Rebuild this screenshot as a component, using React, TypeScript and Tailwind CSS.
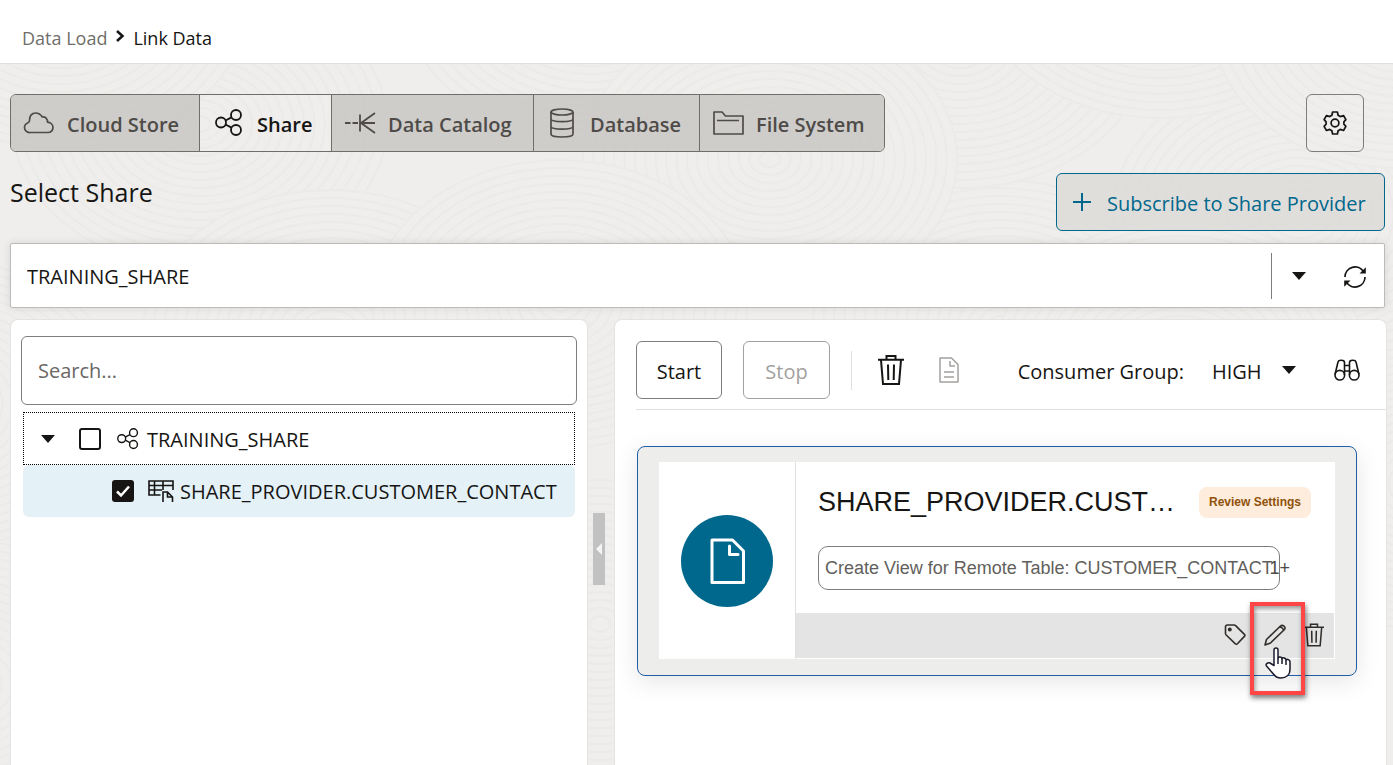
import React from "react";

type IconProps = { className?: string };

const ShareIcon = ({ className }: IconProps) => (
  <svg viewBox="0 0 28 28" className={className} fill="none" stroke="currentColor" strokeWidth="1.8" aria-hidden="true">
    <circle cx="6" cy="13.500" r="5" />
    <circle cx="21" cy="6" r="5" />
    <circle cx="21" cy="21" r="5" />
    <path d="M10.500 11.500 L16.500 8.400 M10.500 15.500 L16.500 18.600" />
  </svg>
);

const CloudIcon = ({ className }: IconProps) => (
  <svg viewBox="0 0 32 24" className={className} fill="none" stroke="currentColor" strokeWidth="1.7" strokeLinejoin="round" aria-hidden="true">
    <path d="M7 21.5 H25 a5 5 0 0 0 5-5 c0-3-2.500-5.200-5.500-5.400 c.2-3.400-2.300-5.600-5.200-5.100 C17.500 3 15.500 2 12.500 2 C9 2 6.400 4.600 6.600 9 C6.600 10.500 6.200 11.200 5 11.700 C3 12.500 1.500 14 1.500 16.500 A5 5 0 0 0 7 21.500 Z" />
  </svg>
);

const CatalogIcon = ({ className }: IconProps) => (
  <svg viewBox="0 0 32 24" className={className} fill="none" stroke="currentColor" strokeWidth="1.8" aria-hidden="true">
    <path d="M1 12 H6.500 M8.500 12 H14 M16 3.500 V20.500 M16 12 H31 M17 12 L31 2 M17 12 L31 22" />
  </svg>
);

const DatabaseIcon = ({ className }: IconProps) => (
  <svg viewBox="0 0 24 30" className={className} fill="none" stroke="currentColor" strokeWidth="1.7" aria-hidden="true">
    <ellipse cx="12" cy="4" rx="11" ry="3" />
    <path d="M1 4 V26 C1 30 23 30 23 26 V4 M1 11 C1 14.500 23 14.500 23 11 M1 18.500 C1 22 23 22 23 18.500" />
  </svg>
);

const FolderIcon = ({ className }: IconProps) => (
  <svg viewBox="0 0 32 24" className={className} fill="none" stroke="currentColor" strokeWidth="1.7" strokeLinejoin="round" aria-hidden="true">
    <path d="M2 23 V1 H10 L13.500 5 H31 V23 Z M5 9.500 H27" />
  </svg>
);

const GearIcon = ({ className }: IconProps) => (
  <svg viewBox="0 0 24 24" className={className} fill="none" stroke="currentColor" strokeWidth="1.700" strokeLinejoin="round" aria-hidden="true">
    <circle cx="12" cy="12" r="3.900" />
    <path d="M9.600 1 H14.400 L15.100 4.300 L17.300 5.600 L20.500 4.500 L22.900 8.700 L20.900 10.800 V13.200 L22.900 15.300 L20.500 19.500 L17.300 18.400 L15.100 19.700 L14.400 23 H9.600 L8.900 19.700 L6.700 18.400 L3.500 19.500 L1.100 15.300 L3.100 13.200 V10.800 L1.100 8.700 L3.500 4.500 L6.700 5.600 L8.900 4.300 Z" />
  </svg>
);

const RefreshIcon = ({ className }: IconProps) => (
  <svg viewBox="0 0 24 24" className={className} fill="none" stroke="currentColor" strokeWidth="1.700" aria-hidden="true">
    <path d="M2 12 A10 10 0 0 1 20.500 6.700 M22 12 A10 10 0 0 1 3.500 17.300" />
    <path d="M22.800 2.300 V8.500 H16.500 Z M1.200 21.700 V15.500 H7.500 Z" fill="currentColor" stroke="none" />
  </svg>
);

const Caret = ({ className }: IconProps) => (
  <svg viewBox="0 0 14 8" className={className} fill="currentColor" aria-hidden="true">
    <path d="M0 0 H14 L7 8 Z" />
  </svg>
);

const TrashIcon = ({ className }: IconProps) => (
  <svg viewBox="0 0 26 30" className={className} fill="none" stroke="currentColor" strokeWidth="2" aria-hidden="true">
    <path d="M0 4.800 H26 M8.500 4.800 V1 H17.500 V4.800 M3 5 L5 29 H21 L23 5 M10 9.500 L10.300 25 M16 9.500 L15.700 25" />
  </svg>
);

const FileTextIcon = ({ className }: IconProps) => (
  <svg viewBox="0 0 20 26" className={className} fill="none" stroke="currentColor" strokeWidth="1.500" strokeLinejoin="round" aria-hidden="true">
    <path d="M1 1 H12.500 L19 7.500 V25 H1 Z M11 4 V9 H16 M5 15 H15 M5 20 H15" />
  </svg>
);

const FileIcon = ({ className }: IconProps) => (
  <svg viewBox="0 0 36 46" className={className} fill="none" stroke="currentColor" strokeWidth="3" strokeLinejoin="round" strokeLinecap="round" aria-hidden="true">
    <path d="M3 2 H23.500 L34.500 13 V44.500 H3 Z M20.500 8 V16.500 H29" />
  </svg>
);

const BinocularsIcon = ({ className }: IconProps) => (
  <svg viewBox="0 0 26 22" className={className} fill="none" stroke="currentColor" strokeWidth="1.600" aria-hidden="true">
    <circle cx="5.800" cy="16.200" r="4.800" />
    <circle cx="20.200" cy="16.200" r="4.800" />
    <path d="M1 15.500 L4 3 C4.500 .5 10.500 .5 10.500 3.500 V16 M25 15.500 L22 3 C21.500 .5 15.500 .5 15.500 3.500 V16 M10.500 6.500 H15.500 M10.500 12 H15.500" />
  </svg>
);

const TableIcon = ({ className }: IconProps) => (
  <svg viewBox="0 0 26 22" className={className} fill="none" stroke="currentColor" strokeWidth="1.600" aria-hidden="true">
    <path d="M12.500 15 H1 V1 H25 V10 M1 5.500 H25 M1 10 H14 M6.500 1 V15 M15 1 V10" />
    <path d="M15 22 V12 H19.500 L24.500 17 V22 M19.500 12 V17 H24.500" />
  </svg>
);

const TagIcon = ({ className }: IconProps) => (
  <svg viewBox="0 0 22 22" className={className} fill="none" stroke="currentColor" strokeWidth="1.600" strokeLinejoin="round" aria-hidden="true">
    <path d="M1.500 3 Q1.500 1 3.500 1 H10 Q11 1 11.600 1.600 L20.400 10.400 Q21.400 11.400 20.400 12.400 L13.400 19.800 Q12.400 20.800 11.400 19.800 L2.200 11 Q1.500 10.300 1.500 9.500 Z" />
    <circle cx="5.800" cy="5.500" r="1.200" fill="currentColor" />
  </svg>
);

const PencilIcon = ({ className }: IconProps) => (
  <svg viewBox="0 0 22 22" className={className} fill="none" stroke="currentColor" strokeWidth="1.600" strokeLinejoin="round" aria-hidden="true">
    <path d="M1 21 L2.500 15.500 L16.500 2 C18.500 .2 22.500 3 20.500 5.500 L6.500 19 Z M15.500 3 C17.500 3 19.500 4.500 19.300 6.700" />
  </svg>
);

const HandCursor = ({ className }: IconProps) => (
  <svg viewBox="0 0 26 32" className={className} fill="#fff" stroke="#1b1b2b" strokeWidth="1.500" strokeLinejoin="round" aria-hidden="true">
    <path d="M9 18.500 V3 C9 .2 13 .2 13 3 V11 C13.500 9.500 16.500 9.800 17 11.500 C18 10.300 20.500 10.800 21 12.800 C22.500 11.800 25 12.800 25 15 V22 C25 28 21 31 16 31 C12 31 10 29.500 8 26.500 L1.500 19 C.2 17 3 15 5 16 Z" />
    <path d="M13 11 V17 M17 11.500 V17 M21 12.800 V18" />
  </svg>
);

const ripples = [
  { x: 200, y: 60 }, { x: 1000, y: 260 }, { x: 1300, y: 150 }, { x: 960, y: -20 },
  { x: 60, y: -60 }, { x: 330, y: 270 }, { x: 590, y: -70 }, { x: 770, y: 95 },
  { x: 1160, y: -90 }, { x: 1180, y: 300 }, { x: 560, y: 240 }, { x: 600, y: 560 },
  { x: -60, y: 340 }, { x: -40, y: 620 }, { x: 1420, y: 420 }, { x: 1400, y: -40 },
];
const radii = Array.from({ length: 18 }, (_, i) => 8 + i * 8);

const Texture = () => (
  <svg className="pointer-events-none absolute inset-0 h-full w-full" fill="#efeeec" stroke="#ebeae8" strokeWidth="2" aria-hidden="true">
    {ripples.map((c) => (
      <g key={`${c.x}:${c.y}`}>
        {[...radii].reverse().map((r) => (
          <ellipse key={r} cx={c.x} cy={c.y} rx={r * 1.3} ry={r} />
        ))}
      </g>
    ))}
  </svg>
);

const tabs = [
  { label: "Cloud Store", icon: <CloudIcon className="h-6 w-8" />, box: "w-[189px] pl-3 gap-3" },
  { label: "Share", icon: <ShareIcon className="h-7 w-7" />, box: "w-[132px] pl-[15px] gap-3.5", active: true },
  { label: "Data Catalog", icon: <CatalogIcon className="h-6 w-8" />, box: "w-[202px] pl-3 gap-3" },
  { label: "Database", icon: <DatabaseIcon className="h-[30px] w-6" />, box: "w-[166px] pl-4 gap-4" },
  { label: "File System", icon: <FolderIcon className="h-6 w-8" />, box: "w-[184px] pl-3 gap-3" },
];

function SourceTabs() {
  return (
    <div role="tablist" aria-label="Source" className="flex h-[58px] divide-x divide-[#706e6b] overflow-hidden rounded-md border border-[#706e6b]">
      {tabs.map((t) => (
        <button
          key={t.label}
          type="button"
          role="tab"
          aria-selected={!!t.active}
          className={`flex items-center text-xl font-semibold whitespace-nowrap ${t.box} ${t.active ? "text-[#161513]" : "bg-[#cccac8]/95 text-[#4e4b48]"}`}
        >
          {t.icon}
          <span className="pt-1">{t.label}</span>
        </button>
      ))}
    </div>
  );
}

function ShareTree() {
  return (
    <section className="flex w-[578px] shrink-0 flex-col rounded-t-lg border border-b-0 border-[#e4e3e1] bg-white px-2.5 pt-4">
      <input
        aria-label="Search"
        placeholder="Search..."
        className="h-[69px] w-full rounded-md border border-[#7f7d7a] px-4 text-xl placeholder:text-[#6a6764] placeholder:opacity-100"
      />
      <ul role="tree" aria-label="Shares" className="mx-0.5 mt-[7px] text-xl">
        <li role="treeitem" aria-expanded="true">
          <div className="flex h-[53px] items-center border border-dotted border-black pl-[17px]">
            <Caret className="h-2 w-3.5" />
            <input type="checkbox" id="training" className="ml-6 size-[22px] appearance-none rounded-[3px] border-2 border-[#161513]" />
            <label htmlFor="training" className="ml-4 flex items-center gap-2">
              <ShareIcon className="size-[22px]" />
              <span className="pt-0.5">TRAINING_SHARE</span>
            </label>
          </div>
          <ul role="group">
            <li role="treeitem" className="flex h-[52px] items-center rounded-md bg-[#e4f1f7] pl-[89px]">
              <span className="grid size-[22px]">
                <input type="checkbox" id="contact" defaultChecked className="col-start-1 row-start-1 size-[22px] appearance-none rounded-[3px] bg-[#161513]" />
                <svg viewBox="0 0 22 22" className="pointer-events-none col-start-1 row-start-1" fill="none" stroke="#fff" strokeWidth="2.500" aria-hidden="true">
                  <path d="M5 11.500 L9 15.500 L17 6.500" />
                </svg>
              </span>
              <label htmlFor="contact" className="ml-3.5 flex items-center gap-1.5 whitespace-nowrap">
                <TableIcon className="h-[22px] w-[26px]" />
                <span className="pt-0.5">SHARE_PROVIDER.CUSTOMER_CONTACT</span>
              </label>
            </li>
          </ul>
        </li>
      </ul>
    </section>
  );
}

function JobCard() {
  return (
    <article className="relative mt-9 mr-[29px] ml-px flex h-[230px] rounded-lg border border-[#1f5fa8] bg-[#ededeb] px-[21px] pt-[15px] pb-4 font-['Liberation_Sans',Arial,sans-serif] shadow-[0_6px_24px_rgba(0,0,0,0.1)]">
      <div className="flex w-[137px] shrink-0 items-center justify-center border-r border-[#e2e1df] bg-white">
        <div className="flex size-[92px] items-center justify-center rounded-full bg-[#00688c] text-white">
          <FileIcon className="h-[46px] w-9" />
        </div>
      </div>
      <div className="flex min-w-0 flex-1 flex-col bg-white">
        <div className="flex items-center justify-between pt-6 pr-6 pl-[22px]">
          <h2 className="text-[27px] leading-8 whitespace-nowrap">SHARE_PROVIDER.CUST…</h2>
          <span className="flex h-[31px] w-28 items-center justify-center rounded-lg bg-[#feecdc] text-xs font-bold whitespace-nowrap text-[#8f520a]">Review Settings</span>
        </div>
        <div className="relative mt-7 mr-[55px] ml-[22px]">
          <input
            aria-label="Action"
            readOnly
            defaultValue="Create View for Remote Table: CUSTOMER_CONTACT"
            className="h-11 w-full rounded-[10px] border border-[#7f7d7a] pl-1.5 text-lg text-[#625f5c]"
          />
          <span className="absolute top-2 -right-2.5 text-lg text-[#4e4b48]">1+</span>
        </div>
        <footer className="mt-auto mr-px mb-px flex h-[45px] items-center justify-end gap-[18px] bg-[#e4e4e4] pr-2.5 pb-0.5 text-[#312d2a]">
          <button type="button" aria-label="Tags"><TagIcon className="size-[22px]" /></button>
          <button type="button" aria-label="Edit"><PencilIcon className="size-[22px]" /></button>
          <button type="button" aria-label="Delete"><TrashIcon className="h-6 w-5" /></button>
        </footer>
      </div>
      <div className="pointer-events-none absolute top-[155px] right-[51px] h-[93px] w-[55px] border-4 border-[#ff4646] shadow-[1px_3px_5px_rgba(0,0,0,0.5),inset_1px_3px_5px_rgba(0,0,0,0.4)]">
        <HandCursor className="absolute top-[41px] left-[11px] h-8 w-[26px]" />
      </div>
    </article>
  );
}

function JobPanel() {
  return (
    <section className="min-w-0 flex-1 rounded-t-lg border border-b-0 border-[#e4e3e1] bg-white pt-[21px] pl-[21px]">
      <div className="flex h-[69px] items-start border-b border-[#e0dfdd] pr-[26px] text-xl">
        <button type="button" className="h-[58px] w-[86px] rounded-md border border-[#7f7d7a] pt-1">Start</button>
        <button type="button" disabled className="ml-[21px] h-[58px] w-[87px] rounded-md border border-[#a3a19f] pt-1 text-[#a3a19f]">Stop</button>
        <div className="flex h-[58px] flex-1 items-center">
          <span className="ml-[21px] h-[39px] w-px bg-[#e0dfdd]" />
          <button type="button" aria-label="Remove all" className="ml-[26px]"><TrashIcon className="h-[30px] w-[26px]" /></button>
          <button type="button" aria-label="Report" disabled className="ml-[35px] text-[#a3a19f]"><FileTextIcon className="h-[26px] w-5" /></button>
          <label htmlFor="group" className="ml-auto pt-1">Consumer Group:</label>
          <div className="ml-7 flex items-center">
            <select id="group" className="w-[70px] appearance-none pt-1"><option>HIGH</option></select>
            <Caret className="h-2 w-3.5" />
          </div>
          <button type="button" aria-label="Find" className="ml-[38px]"><BinocularsIcon className="h-[22px] w-[26px]" /></button>
        </div>
      </div>
      <JobCard />
    </section>
  );
}

export default function App() {
  return (
    <div className="flex min-h-screen flex-col bg-[#efeeec] font-['Open_Sans','Noto_Sans',sans-serif] text-[#161513]">
      <header className="border-b border-[#e0dfdd] bg-white">
        <nav aria-label="Breadcrumb" className="flex h-[63px] items-center px-[22px] pt-3 text-lg">
          <a href="#load" className="text-[#706e6b]">Data Load</a>
          <svg viewBox="0 0 10 12" className="mx-2 mb-1 h-3 w-2.5" fill="none" stroke="currentColor" strokeWidth="2.500" aria-hidden="true">
            <path d="M2 1 L7.500 6 L2 11" />
          </svg>
          <span aria-current="page">Link Data</span>
        </nav>
      </header>
      <main className="relative flex flex-1 flex-col pt-[30px] pr-2 pl-2.5">
        <Texture />
        <div className="relative flex items-center justify-between pr-[21px]">
          <SourceTabs />
          <button type="button" aria-label="Settings" className="flex size-[58px] items-center justify-center rounded-md border border-[#7f7d7a]">
            <GearIcon className="size-6" />
          </button>
        </div>
        <div className="relative mt-[21px] flex items-start justify-between">
          <h1 className="text-[25px] leading-[38px]">Select Share</h1>
          <button type="button" className="flex h-[58px] w-[329px] items-center gap-4 rounded-md border border-[#00688c] bg-[#dedcda]/95 pl-4 text-xl text-[#00688c]">
            <svg viewBox="0 0 18 18" className="size-[18px]" stroke="currentColor" strokeWidth="2" aria-hidden="true">
              <path d="M9 0 V18 M0 9 H18" />
            </svg>
            <span className="pt-1">Subscribe to Share Provider</span>
          </button>
        </div>
        <div className="relative mt-3 flex h-[65px] items-center rounded-xs border border-[#bdbbb9] bg-white shadow-[0_0_8px_rgba(0,0,0,0.1)]">
          <select aria-label="Share" className="h-full flex-1 appearance-none pt-0.5 pl-4 text-xl"><option>TRAINING_SHARE</option></select>
          <span className="h-[46px] w-px bg-[#7f7d7a]" />
          <Caret className="mx-5 h-2 w-3.5" />
          <button type="button" aria-label="Refresh" className="mr-[17px] ml-[17px] pt-0.5"><RefreshIcon className="size-6" /></button>
        </div>
        <div className="relative mt-[11px] -mr-0.5 flex flex-1">
          <ShareTree />
          <div className="flex w-[26px] shrink-0 items-center justify-center pt-[14px] pr-[4px]">
            <button type="button" aria-label="Collapse panel" className="flex h-[72px] w-3 items-center justify-end bg-[#c1c1c1] pr-[3px] text-[#f4f4f4]">
              <svg viewBox="0 0 6 12" className="h-3 w-1.5" fill="currentColor" aria-hidden="true"><path d="M6 0 V12 L0 6 Z" /></svg>
            </button>
          </div>
          <JobPanel />
        </div>
      </main>
    </div>
  );
}
